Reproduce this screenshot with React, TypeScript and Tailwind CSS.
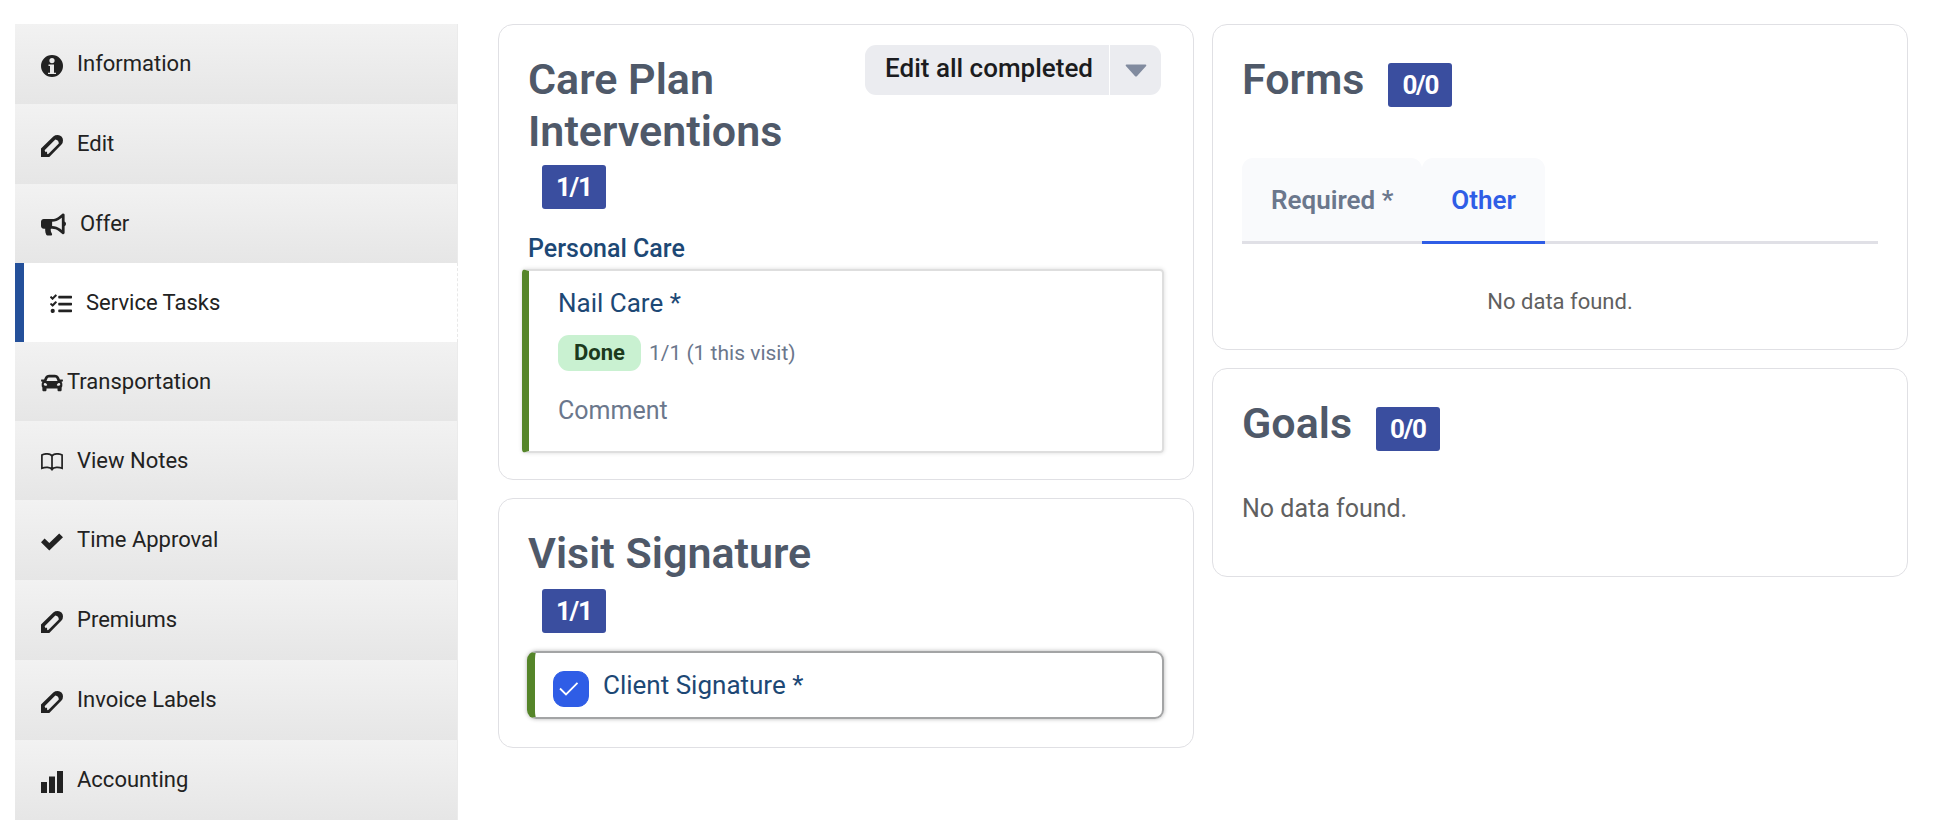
import React from "react";
import { FaBullhorn, FaCar, FaTasks } from "react-icons/fa";

function InfoIcon() {
  return (
    <svg width="22" height="22" viewBox="0 0 22 22" fill="currentColor" fillRule="evenodd" aria-hidden="true">
      <path d="M11 0a11 11 0 1 0 0 22a11 11 0 0 0 0-22zM11 3a2.6 2.6 0 1 1 0 5.200a2.600 2.600 0 0 1 0-5.200zM7.500 9.500h5.500v8.200h2v1.300h-8v-1.300h2v-6.700h-1.500z" />
    </svg>
  );
}

function PencilIcon() {
  return (
    <svg width="22" height="22" viewBox="0 0 22 22" fill="currentColor" fillRule="evenodd" aria-hidden="true">
      <path d="M0 22V13.500L12.300 1.400Q14 0 16.800 0A5.200 5.200 0 0 1 22 5.200Q22 8 20.500 9.600L8.300 22ZM3.600 15.200L4.600 17.300L6 16.400L6.200 19.200L7.600 18.800L17.800 8.400Q17.800 5.200 14.300 4.500Z" />
    </svg>
  );
}

function BookIcon() {
  return (
    <svg width="22" height="18" viewBox="0 0 22 18" fill="none" stroke="currentColor" strokeWidth="1.700" aria-hidden="true">
      <path d="M11 17V3C9.500 .3 3.500 .3 .9 2v13.300C4 13.900 9.500 13.900 11 16.500C12.500 13.900 18 13.900 21.100 15.300V2C18.500 .3 12.500 .3 11 3" />
    </svg>
  );
}

function CheckIcon() {
  return (
    <svg width="22" height="18" viewBox="0 0 22 18" fill="currentColor" aria-hidden="true">
      <path d="M0 9.300L3.600 5.600L8.300 9.900L18.200 .5L22 4.200L8.300 17.500Z" />
    </svg>
  );
}

function BarsIcon() {
  return (
    <svg width="22" height="22" viewBox="0 0 22 22" fill="currentColor" aria-hidden="true">
      <path d="M0 11h6v11H0zM8 5.500h6V22H8zM16 0h6v22h-6z" />
    </svg>
  );
}

type NavItem = { label: string; icon: React.ReactNode; gap: string; size: string; active?: boolean };

const navItems: NavItem[] = [
  { label: "Information", icon: <InfoIcon />, gap: "gap-3.5", size: "h-20" },
  { label: "Edit", icon: <PencilIcon />, gap: "gap-3.5", size: "h-20" },
  { label: "Offer", icon: <FaBullhorn size={25} />, gap: "gap-3.5", size: "h-[79px]" },
  { label: "Service Tasks", icon: <FaTasks size={22} />, gap: "gap-3.5", size: "h-[79px]", active: true },
  { label: "Transportation", icon: <FaCar size={22} />, gap: "gap-1", size: "h-[79px]" },
  { label: "View Notes", icon: <BookIcon />, gap: "gap-3.5", size: "h-[79px]" },
  { label: "Time Approval", icon: <CheckIcon />, gap: "gap-3.5", size: "h-20" },
  { label: "Premiums", icon: <PencilIcon />, gap: "gap-3.5", size: "h-20" },
  { label: "Invoice Labels", icon: <PencilIcon />, gap: "gap-3.5", size: "h-20" },
  { label: "Accounting", icon: <BarsIcon />, gap: "gap-3.5", size: "h-20" },
];

function Sidebar() {
  return (
    <nav aria-label="Visit" className="w-[443px] shrink-0">
      <ul>
        {navItems.map((item) => (
          <li key={item.label}>
            <a
              href="#"
              aria-current={item.active ? "page" : undefined}
              className={`flex items-center border-r text-[22px] text-[#222] ${item.size} ${item.gap} ${
                item.active
                  ? "border-l-9 border-l-[#24509a] border-dashed border-r-[#e8e8e8] bg-white pl-[26px] [border-left-style:solid]"
                  : "border-r-[#ebebeb] bg-linear-to-b from-[#f2f2f2] to-[#e6e6e6] pl-[26px]"
              }`}
            >
              <span className={item.size === "h-20" ? "pt-1" : "pt-0.5"}>{item.icon}</span>
              <span>{item.label}</span>
            </a>
          </li>
        ))}
      </ul>
    </nav>
  );
}

function Card({ children, className = "" }: { children: React.ReactNode; className?: string }) {
  return <section className={`rounded-[15px] border border-[#e0e0e4] bg-white px-[29px] ${className}`}>{children}</section>;
}

function Title({ children }: { children: React.ReactNode }) {
  return <h2 className="text-[43px] leading-[52px] font-semibold text-[#4f5969]">{children}</h2>;
}

function Badge({ children }: { children: React.ReactNode }) {
  return (
    <span className="inline-flex h-11 items-center rounded-[3px] bg-[#3a4e9f] px-3.5 text-[26px] font-bold tracking-tighter text-white">
      {children}
    </span>
  );
}

export default function App() {
  return (
    <div className="flex items-start gap-10 bg-white py-6 pr-[26px] pl-[15px] font-['Roboto',sans-serif] text-[26px] leading-8">
      <Sidebar />
      <main className="grid flex-1 grid-cols-2 items-start gap-[18px]">
        <div className="flex flex-col gap-[18px]">
          <Card className="pt-5 pb-[26px]">
            <div className="flex items-start justify-between">
              <div className="pt-2">
                <div className="w-[270px]">
                  <Title>Care Plan Interventions</Title>
                </div>
                <div className="mt-2 ml-3.5 flex">
                  <Badge>1/1</Badge>
                </div>
              </div>
              <div className="mr-[3px] flex h-[50px] gap-px text-[#1b1c20]">
                <button type="button" className="rounded-l-[11px] bg-[#ebecf0] pr-4 pb-1 pl-5 font-medium">
                  Edit all completed
                </button>
                <button type="button" aria-label="More actions" className="flex w-[51px] items-center justify-center rounded-r-[11px] bg-[#ebecf0]">
                  <svg width="22" height="13" viewBox="0 0 22 13" fill="#818b9f" aria-hidden="true">
                    <path d="M1.500 .5h19q1.500 .2 .6 1.500l-9 10q-1.100 1-2.200 0l-9-10q-.9-1.300 .6-1.500z" />
                  </svg>
                </button>
              </div>
            </div>
            <h3 className="mt-6 text-[25px] font-medium text-[#1d4875]">Personal Care</h3>
            <article className="-ml-1.5 mt-1 rounded-[4px] border-2 border-l-7 border-[#dedede] border-l-[#558529] pt-4 pr-6 pb-6 pl-[29px] shadow-[0_0_4px_rgba(0,0,0,0.15)]">
              <h4 className="text-[#1d4875]">Nail Care *</h4>
              <p className="mt-4 flex items-center gap-2 text-[21px] text-[#6b778c]">
                <span className="flex h-9 items-center rounded-[11px] bg-[#c9f1d1] px-4 text-[22px] font-bold text-[#1c3a1d]">Done</span>
                <span>1/1 (1 this visit)</span>
              </p>
              <p className="mt-6 text-[25px] text-[#6b778c]">Comment</p>
            </article>
          </Card>
          <Card className="pt-7 pb-7">
            <Title>Visit Signature</Title>
            <div className="mt-2.5 ml-3.5 flex">
              <Badge>1/1</Badge>
            </div>
            <label className="mt-[18px] -ml-px flex h-[68px] items-center rounded-[9px] border-2 border-l-8 border-[#a3a4a5] border-l-[#558529] pl-[18px] text-[#1d4875] shadow-[0_0_4px_rgba(0,0,0,0.3)]">
              <span className="relative mt-2 mr-3.5 flex">
                <input type="checkbox" defaultChecked className="size-9 appearance-none rounded-[11px] border border-[#2f5de6] bg-white checked:bg-[#2f5de6]" />
                <svg className="pointer-events-none absolute top-[11px] left-[6px]" width="20" height="14" viewBox="0 0 20 14" fill="none" stroke="white" strokeWidth="1.800" aria-hidden="true">
                  <path d="M1 6.500L7 12.500L18.500 .8" />
                </svg>
              </span>
              <span>Client Signature *</span>
            </label>
          </Card>
        </div>
        <div className="flex flex-col gap-[18px]">
          <Card className="pt-7 pb-[31px]">
            <div className="flex items-start gap-6">
              <Title>Forms</Title>
              <div className="flex pt-2.5">
                <Badge>0/0</Badge>
              </div>
            </div>
            <div role="tablist" className="mt-[51px] flex shadow-[inset_0_-3px_0_#e0e0e6]">
              <button type="button" role="tab" aria-selected="false" className="h-[86px] rounded-t-[11px] border-b-3 border-[#e0e0e6] bg-[#f9fafc] px-[29px] font-semibold text-[#6b778c]">
                Required *
              </button>
              <button type="button" role="tab" aria-selected="true" className="h-[86px] rounded-t-[11px] border-b-3 border-[#2f5de6] bg-[#f9fafc] px-[29px] font-semibold text-[#2f5de6]">
                Other
              </button>
            </div>
            <p className="mt-[42px] text-center text-[22px] text-[#606060]">No data found.</p>
          </Card>
          <Card className="pt-7 pb-[51px]">
            <div className="flex items-start gap-6">
              <Title>Goals</Title>
              <div className="flex pt-2.5">
                <Badge>0/0</Badge>
              </div>
            </div>
            <p className="mt-[42px] text-[25px] text-[#606060]">No data found.</p>
          </Card>
        </div>
      </main>
    </div>
  );
}
